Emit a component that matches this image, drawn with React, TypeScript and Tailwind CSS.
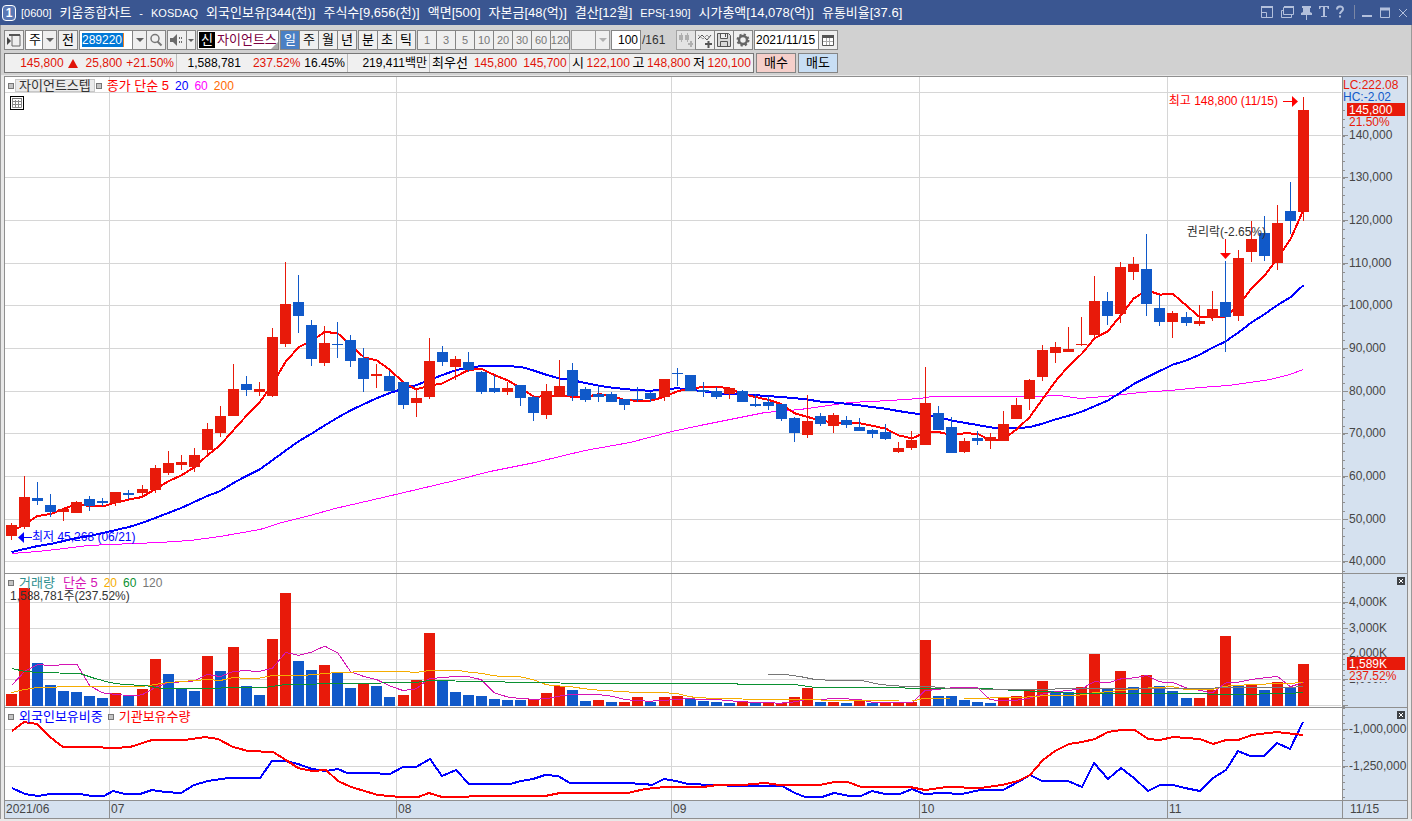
import type { ReactNode } from 'react';

const FONT = "font-['Liberation_Sans','Noto_Sans_CJK_KR',sans-serif]";

const UP = '#e81a0a';
const DOWN = '#1059c9';
const GRID = '#d6d6d6';

// Plot space shared by the three panels
const PLOT_LEFT = 5;
const PLOT_WIDTH = 1337;
const STEP = 13.05;
const barX = (i: number) => 11.5 + STEP * i;

const MONTH_LINES = [109, 396, 671, 919, 1167];

type Candle = [high: number, top: number, bottom: number, low: number, up: 0 | 1];

const candles: Candle[] = [
  [523, 525, 536, 540, 1], [476, 497, 527, 529, 1], [482, 498, 501, 505, 0], [494, 505, 512, 517, 0],
  [509, 509, 512, 521, 1], [501, 502, 513, 513, 1], [496, 499, 506, 511, 0], [498, 501, 503, 506, 0],
  [492, 492, 503, 506, 1], [490, 493, 495, 499, 0], [485, 489, 493, 497, 1], [465, 468, 490, 493, 1],
  [451, 463, 473, 475, 1], [455, 462, 465, 470, 1], [448, 455, 467, 472, 1], [423, 429, 450, 455, 1],
  [406, 416, 433, 437, 1], [364, 389, 416, 416, 1], [376, 384, 390, 396, 0], [382, 389, 392, 396, 1],
  [328, 337, 396, 397, 1], [262, 304, 344, 347, 1], [275, 302, 316, 333, 0], [320, 325, 359, 366, 0],
  [326, 343, 363, 366, 1], [322, 344, 345, 358, 0], [335, 340, 361, 367, 0], [348, 358, 379, 392, 0],
  [364, 374, 376, 388, 1], [371, 376, 391, 391, 0], [382, 382, 405, 409, 0], [389, 398, 403, 417, 1],
  [338, 361, 397, 399, 1], [346, 352, 362, 366, 0], [356, 359, 367, 380, 1], [352, 362, 370, 372, 0],
  [371, 372, 392, 394, 0], [375, 388, 392, 393, 0], [382, 388, 392, 395, 1], [385, 385, 398, 406, 0],
  [396, 397, 413, 421, 0], [384, 391, 415, 419, 1], [360, 386, 397, 397, 1], [363, 370, 396, 401, 0],
  [387, 389, 400, 402, 0], [386, 394, 397, 402, 0], [392, 394, 402, 402, 0], [399, 399, 405, 410, 0],
  [387, 399, 400, 402, 0], [392, 393, 399, 402, 0], [379, 379, 397, 401, 1], [368, 373, 374, 386, 0],
  [375, 375, 391, 391, 0], [382, 390, 392, 397, 0], [387, 391, 397, 399, 0], [388, 388, 394, 399, 1],
  [390, 391, 402, 402, 0], [394, 404, 406, 407, 0], [396, 402, 406, 410, 0], [404, 404, 419, 421, 0],
  [417, 418, 433, 442, 0], [395, 421, 435, 438, 1], [413, 416, 424, 426, 0], [413, 415, 426, 433, 1],
  [416, 420, 425, 428, 0], [418, 427, 431, 431, 0], [429, 430, 434, 438, 0], [424, 432, 439, 440, 0],
  [442, 448, 452, 453, 1], [431, 440, 448, 450, 1], [367, 403, 445, 445, 1], [406, 413, 430, 430, 0],
  [417, 427, 453, 453, 0], [438, 441, 452, 453, 1], [431, 438, 441, 445, 0], [433, 437, 441, 449, 1],
  [411, 424, 441, 441, 1], [398, 405, 419, 419, 1], [379, 380, 399, 410, 1], [345, 350, 377, 381, 1],
  [342, 347, 353, 363, 1], [327, 349, 352, 352, 1], [317, 344, 345, 346, 1], [276, 301, 335, 337, 1],
  [292, 301, 316, 325, 0], [262, 267, 314, 323, 1], [257, 264, 272, 280, 1], [234, 269, 304, 316, 0],
  [295, 308, 322, 326, 0], [311, 313, 322, 338, 1], [312, 317, 323, 326, 0], [305, 321, 324, 326, 1],
  [291, 309, 318, 321, 1], [261, 302, 317, 352, 0], [250, 258, 316, 321, 1], [221, 239, 252, 262, 1],
  [216, 233, 256, 261, 0], [205, 223, 263, 270, 1], [182, 211, 221, 234, 0], [97, 110, 212, 221, 1],
];

// Top edge of each volume bar, negative when volume fell
const volumes = [
  694, 588, -663, -685, -691, -692, -696, -698, 693, -696, 689, 659, -674, -689, -691, 656, -671, 647, -686, -695,
  639, 593, -661, -670, 665, -673, -688, 684, -686, -697, 695, 680, 633, -680, -692, -695, -696, -699, -700, -700,
  699, 693, 686, -690, -701, 700, -702, 702, 697, -702, 697, 696, -699, -701, -702, -703, 701, -703, 703, 703,
  697, 688, -702, 702, -703, 700, -703, 703, 703, 702, 640, -696, -696, -700, -702, -703, 698, 696, 690, 681,
  -691, -692, 687, 654, -688, 671, -687, 675, -686, -691, -698, 698, 690, 636, -686, 685, -690, 682, -688, 664,
];

const closes = candles.map(([, top, bottom, , up]) => (up ? top : bottom));
const volumeTops = volumes.map(Math.abs);

// The seed holds the averages that need bars older than the first one drawn
const movingAverage = (values: number[], period: number, seed: number[]) =>
  values
    .map((_, i) => {
      if (i < seed.length) return seed[i];
      const slice = values.slice(i - period + 1, i + 1);
      return slice.reduce((sum, v) => sum + v, 0) / period;
    })
    .map((y, i) => `${barX(i).toFixed(1)},${y.toFixed(1)}`)
    .join(' ');

const priceMa5 = movingAverage(closes, 5, [532, 524, 516, 514]);
const priceMa20 = movingAverage(closes, 20, [
  552, 549, 546, 544, 541, 538, 536, 533, 530, 527, 523, 518, 513, 508, 502, 496, 491, 483, 476,
]);
const priceMa60 =
  '12,553 38,551 64,548 88,545 110,544 160,542 190,540 220,536 260,529 282,522 310,515 335,508 370,500 400,493 455,480 490,471 535,462 585,450 630,442 672,431 700,425 730,419 765,412 800,409 850,402 890,400 920,398 932,396 1035,396 1060,395 1080,398 1093,397 1115,395 1140,392 1170,390 1200,387 1228,385 1250,382 1270,379 1290,374 1303,369';

const volumeMa5 = movingAverage(volumeTops, 5, [685, 671, 664, 665]);
const volumeMa20 = movingAverage(volumeTops, 20, [
  692, 689, 687, 687, 686, 686, 686, 686, 686, 686, 686, 684, 682, 681, 680, 679, 680, 677, 678,
]);
const volumeMa60 =
  '12,668 25,671 38,672 80,673 95,678 110,682 123,684 145,685 162,688 215,688 228,687 265,687 285,684 350,683 415,682 430,680 480,681 530,682 590,683 735,683 740,684 795,684 815,687 890,687 920,688 985,688 1015,690 1045,691 1070,693 1200,693 1215,694 1230,694 1290,693 1303,692';
const volumeMa120 =
  '768,674 785,674 800,676 815,679 835,680 862,680 880,684 905,686 930,686 950,688 1010,689 1050,689 1060,688 1180,688 1250,687 1290,687 1303,686';

const foreignLine =
  '12,788 25,794 38,796 50,794 80,794 92,796 104,796 113,791 125,794 140,794 152,790 165,792 181,793 194,785 208,781 228,778 260,778 272,761 285,761 298,764 312,769 326,771 338,769 347,773 370,773 390,774 403,767 416,767 430,759 442,776 456,770 469,784 510,784 521,781 533,779 545,775 558,776 570,783 625,783 645,784 652,785 664,779 676,781 688,784 740,786 782,786 795,793 805,797 822,797 834,793 850,796 861,796 872,791 885,794 900,794 912,789 924,794 942,793 962,794 980,790 1003,790 1018,782 1030,775 1042,781 1068,781 1082,787 1094,763 1108,779 1121,768 1134,778 1148,791 1160,785 1173,785 1185,788 1200,791 1213,778 1226,770 1238,751 1250,756 1264,756 1277,743 1290,749 1303,722';
const institutionLine =
  '12,731 24,722 37,724 50,737 63,747 90,747 115,748 130,747 152,740 185,740 205,737 218,739 233,747 248,751 273,752 286,760 298,768 312,771 326,770 338,781 351,787 378,795 400,797 418,797 429,793 442,797 468,797 470,796 545,796 560,793 628,793 645,789 665,787 703,787 717,785 742,785 765,783 780,785 820,785 834,782 848,782 861,787 910,787 925,790 947,787 980,788 1002,785 1018,781 1030,775 1043,760 1055,751 1069,744 1082,742 1095,739 1108,732 1121,730 1135,730 1148,739 1160,740 1173,737 1200,739 1213,744 1226,740 1238,740 1252,735 1277,732 1303,735';

const titleItems = [
  { text: '[0600]', latin: true },
  { text: '키움종합차트' },
  { text: '-', latin: true },
  { text: 'KOSDAQ', latin: true },
  { text: '외국인보유[344(천)]' },
  { text: '주식수[9,656(천)]' },
  { text: '액면[500]' },
  { text: '자본금[48(억)]' },
  { text: '결산[12월]' },
  { text: 'EPS[-190]', latin: true },
  { text: '시가총액[14,078(억)]' },
  { text: '유통비율[37.6]' },
];

function Plot({ top, height, gridLines, children }: {
  top: number;
  height: number;
  gridLines: number[];
  children: ReactNode;
}) {
  return (
    <svg
      className="block w-full h-full"
      viewBox={`${PLOT_LEFT} ${top} ${PLOT_WIDTH} ${height}`}
      preserveAspectRatio="none"
    >
      <g fill={GRID} shapeRendering="crispEdges">
        {gridLines.map((y) => <rect key={y} x={5} y={y} width={1336} height={1} />)}
        {MONTH_LINES.map((x) => <rect key={x} x={x} y={top} width={1} height={height} />)}
      </g>
      {children}
    </svg>
  );
}

// Hairlines sit on the pixel centre, otherwise crispEdges drops their flat runs
function Line({ points, color, width = 1 }: { points: string; color: string; width?: number }) {
  return (
    <polyline
      points={points}
      fill="none"
      stroke={color}
      strokeWidth={width}
      strokeLinejoin="round"
      shapeRendering="crispEdges"
      transform={width === 1 ? 'translate(0 0.5)' : undefined}
    />
  );
}

function Ticks({ from, to, step }: { from: number; to: number; step: number }) {
  const ys: number[] = [];
  for (let y = from; y < to; y += step) ys.push(Math.round(y));
  return (
    <g fill="#8f8f8f" shapeRendering="crispEdges">
      {ys.map((y) => <rect key={y} x={1343} y={y} width={2} height={1} />)}
    </g>
  );
}

function AxisLabel({ y, children }: { y: number; children: string }) {
  return (
    <g>
      <rect x={1343} y={y} width={5} height={1} fill="#8f8f8f" />
      <text x={1349} y={y + 4} fill="#454545">{children}</text>
    </g>
  );
}

function Axis({ top, height, children }: { top: number; height: number; children: ReactNode }) {
  return (
    <svg
      className="block w-[64px] h-full text-xs"
      viewBox={`1343 ${top} 64 ${height}`}
    >
      {children}
    </svg>
  );
}

function Marker() {
  return <span className="w-[6px] h-[6px] border border-[#777] bg-[#c4c4c4] shrink-0" />;
}

function ToolButton({ label, active, muted, className = 'w-5 -ml-px', children }: {
  label?: string;
  active?: boolean;
  muted?: boolean;
  className?: string;
  children?: ReactNode;
}) {
  return (
    <button
      type="button"
      aria-label={label}
      className={`flex items-center justify-center h-5 shrink-0 border border-[#858585] ${
        active ? 'bg-[#4a80c4] text-white' : 'bg-[#efefef]'
      } ${muted ? 'text-[#777] text-[11px]' : ''} ${className}`}
    >
      {children}
    </button>
  );
}

function Caret({ muted }: { muted?: boolean }) {
  return (
    <svg width="8" height="4" viewBox="0 0 8 4" className="shrink-0">
      <path d="M0 0h8L4 4z" fill={muted ? '#b0b0b0' : '#606060'} />
    </svg>
  );
}

function PanelClose() {
  return (
    <button type="button" aria-label="닫기" className="absolute right-[2px] top-[3px] w-2 h-2 bg-[#3f4246]">
      <svg width="8" height="8" viewBox="0 0 8 8">
        <path d="M2 2l4 4M6 2l-4 4" stroke="#fff" />
      </svg>
    </button>
  );
}

function TitleBar() {
  return (
    <header className="flex items-center h-[25px] pl-[2px] pr-1 bg-[#3a5691] text-white">
      <span className="flex items-center justify-center w-[14px] h-4 rounded-sm border border-white bg-[#5a78b5] text-xs font-bold">1</span>
      <h1 className="flex items-center gap-2 ml-[5px] whitespace-nowrap">
        {titleItems.map(({ text, latin }) => (
          <span key={text} className={latin ? 'text-[11px]' : ''}>{text}</span>
        ))}
      </h1>
      <svg className="ml-auto shrink-0" width="148" height="20" viewBox="1260 3 148 20" fill="none" stroke="#b3c0dc">
        <path d="M1261.500 7v10.500h11v-11h-11M1261 12.500h5.500v5" />
        <path d="M1261 7h12" strokeWidth="2" />
        <path d="M1285.500 7.500h8v7h-10v-7zM1284 10.500h-2.500v7h10V15" />
        <path d="M1284 7h10" strokeWidth="2" />
        <path d="M1302 6h9v2h-1v4l2 1v2h-11v-2l2-1v-4h-1zM1306 15h1v5h-1z" fill="#b3c0dc" stroke="none" />
        <path d="M1319 6h10v3h-1l-1-2h-2v9h2v1h-6v-1h2V7h-2l-1 2h-1z" fill="#b3c0dc" stroke="none" />
        <path d="M1337 9.500c0-4 6-4 6-.5 0 2.500-3 2.500-3 5M1340 15.500v2" strokeWidth="2" />
        <path d="M1354.500 5v14" stroke="#7b87a5" />
        <path d="M1362 16h10" strokeWidth="2" />
        <path d="M1380.500 9v8.500h9V9" />
        <path d="M1380 9h10" strokeWidth="3" />
        <path d="M1399 9l8 8M1407 9l-8 8" />
      </svg>
    </header>
  );
}

function Toolbar() {
  return (
    <div className="flex items-center h-5 pl-[3px] gap-px">
      <ToolButton label="창 열기" className="w-5">
        <svg width="16" height="16" viewBox="0 0 16 16">
          <path d="M3 3h11v11H6M6 3v11" fill="none" stroke="#666" />
          <path d="M3 2h11v2H3z" fill="#555" />
          <path d="M1 5l4 4-4 4z" fill="#444" />
        </svg>
      </ToolButton>

      <div className="relative flex items-center h-5 w-8 border border-[#858585] bg-white">
        <select aria-label="구분" className="appearance-none w-full h-full pl-[3px] outline-none">
          <option>주</option>
        </select>
        <span className="absolute right-0 top-0 h-full w-[14px] flex items-center justify-center border-l border-[#858585] bg-[#efefef] pointer-events-none">
          <Caret />
        </span>
      </div>

      <ToolButton className="w-5">전</ToolButton>

      <div className="flex">
        <div className="flex items-center h-5 w-[68px] border border-[#858585] bg-white pl-[2px]">
          <span className="flex-1">
            <input
              aria-label="종목코드"
              defaultValue="289220"
              className="block w-[42px] h-[14px] text-xs bg-[#0078d7] text-white outline-none border-r border-[#f08020]"
            />
          </span>
          <button type="button" aria-label="종목 목록" className="flex items-center justify-center w-[14px] h-full border-l border-[#858585] bg-[#efefef]">
            <Caret />
          </button>
        </div>
        <ToolButton label="종목 검색">
          <svg width="14" height="14" viewBox="0 0 14 14" fill="none" stroke="#777">
            <circle cx="6" cy="5.500" r="4" strokeWidth="1.500" />
            <path d="M8.500 8.500l4 4" strokeWidth="2" />
          </svg>
        </ToolButton>
      </div>

      <div className="flex">
        <ToolButton label="소리" className="w-5">
          <svg width="14" height="12" viewBox="0 0 14 12" fill="#6a6a6a">
            <path d="M0 4h3v4H0zM3 4l4-4v12L3 8zM9 3h1v2H9zM9 7h1v2H9zM11 3h1v2h-1zM11 7h1v2h-1z" />
          </svg>
        </ToolButton>
        <ToolButton label="소리 설정" className="w-[10px] -ml-px">
          <svg width="6" height="3" viewBox="0 0 6 3" className="shrink-0">
            <path d="M0 0h6L3 3z" fill="#606060" />
          </svg>
        </ToolButton>
      </div>

      <div className="relative flex items-center h-5 w-[82px] border border-[#858585] bg-white pl-px gap-[2px] overflow-hidden whitespace-nowrap">
        <span className="flex items-center justify-center w-4 h-4 bg-black text-white shrink-0">신</span>
        <span className="text-[#7b0041]">자이언트스</span>
        <svg className="absolute right-0 bottom-0" width="7" height="7" viewBox="0 0 7 7">
          <path d="M7 0v7H0z" fill="#aaa" />
        </svg>
      </div>

      <div className="flex">
        <ToolButton active className="w-5">일</ToolButton>
        <ToolButton>주</ToolButton>
        <ToolButton>월</ToolButton>
        <ToolButton>년</ToolButton>
      </div>

      <div className="flex">
        <ToolButton className="w-5">분</ToolButton>
        <ToolButton>초</ToolButton>
        <ToolButton>틱</ToolButton>
      </div>

      <div className="flex pl-px">
        {['1', '3', '5', '10', '20', '30', '60', '120'].map((n) => (
          <ToolButton key={n} muted>{n}</ToolButton>
        ))}
      </div>

      <div className="relative h-5 w-[39px] border border-[#9a9a9a] bg-[#efefef]">
        <select aria-label="사용자 주기" disabled className="appearance-none w-full h-full" />
        <span className="absolute right-0 top-0 h-full w-[14px] flex items-center justify-center border-l border-[#9a9a9a] pointer-events-none">
          <Caret muted />
        </span>
      </div>

      <div className="flex items-center w-[64px] text-xs">
        <input aria-label="조회 개수" defaultValue="100" className="h-5 w-[30px] pr-[2px] text-right border border-[#858585] bg-white outline-none" />
        <span className="pl-px text-[#333]">/161</span>
      </div>

      <div className="flex">
        <ToolButton label="봉 추가" className="w-5 opacity-60">
          <svg width="16" height="16" viewBox="0 0 16 16" fill="#999" shapeRendering="crispEdges">
            <path d="M1 3h4v5H1zM3 1h1v9H3zM7 3h4v5H7zM9 1h1v9H9zM10 11h5v2h-5zM12 9h2v6h-2z" />
          </svg>
        </ToolButton>
        <ToolButton label="지표 추가">
          <svg width="16" height="16" viewBox="0 0 16 16" fill="none" stroke="#555">
            <path d="M1 7l4-4 5 5 4-5" />
            <path d="M1 3l5 4 4-4 3 3" stroke="#999" />
            <path d="M8 12h7M11.500 9v7" strokeWidth="2" />
          </svg>
        </ToolButton>
        <ToolButton label="저장">
          <svg width="14" height="14" viewBox="0 0 14 14" fill="#d8d8d8" stroke="#555">
            <path d="M.5.5h11l2 2v11H.5zM3.500.5v5h7v-5M3.500 13.500v-5h7v5M8.500 1v3" />
          </svg>
        </ToolButton>
        <ToolButton label="설정">
          <svg width="14" height="14" viewBox="0 0 14 14" fill="none" stroke="#666">
            <circle cx="7" cy="7" r="4" strokeWidth="2.500" />
            <circle cx="7" cy="7" r="5.500" strokeWidth="2" strokeDasharray="2.200 2.120" />
          </svg>
        </ToolButton>
      </div>

      <div className="flex text-xs">
        <input aria-label="조회 일자" defaultValue="2021/11/15" className="h-5 w-[65px] pl-px border border-[#858585] bg-white outline-none" />
        <ToolButton label="달력">
          <svg width="12" height="12" viewBox="0 0 12 12">
            <path d="M.5 2h11v9.500H.5z" fill="#fff" stroke="#555" />
            <path d="M0 1h12v3H0z" fill="#555" />
            <path d="M1 7.500h10M4.500 4v7M7.500 4v7" stroke="#aaa" />
          </svg>
        </ToolButton>
      </div>
    </div>
  );
}

function QuoteBar() {
  const red = 'text-[#e01408]';
  return (
    <div className="flex items-center pl-[3px] gap-[2px]">
      <div className="flex h-5 w-[750px] text-xs border border-[#777] bg-[#f0f0f0] whitespace-nowrap">
        <div className={`flex items-center justify-end w-[172px] pr-[2px] border-r border-[#bbb] ${red}`}>
          <span>145,800</span>
          <svg className="ml-1 mr-2" width="10" height="9" viewBox="0 0 10 9"><path d="M5 0l5 9H0z" fill="#e01408" /></svg>
          <span>25,800</span>
          <span className="ml-1">+21.50%</span>
        </div>
        <div className="flex items-center justify-end w-[171px] pr-[2px] border-r border-[#bbb]">
          <span>1,588,781</span>
          <span className={`ml-3 ${red}`}>237.52%</span>
          <span className="ml-1">16.45%</span>
        </div>
        <div className="flex items-center justify-end w-[82px] pr-[2px] border-r border-[#bbb]">219,411백만</div>
        <div className="flex items-center w-[140px] pl-[2px] border-r border-[#bbb]">
          <span className="text-[13px]">최우선</span>
          <span className={`ml-[6px] ${red}`}>145,800</span>
          <span className={`ml-[6px] ${red}`}>145,700</span>
        </div>
        <div className="flex flex-1 items-center justify-between px-[2px]">
          <span className="text-[13px]">시</span><span className={red}>122,100</span>
          <span className="text-[13px]">고</span><span className={red}>148,800</span>
          <span className="text-[13px]">저</span><span className={red}>120,100</span>
        </div>
      </div>
      <button type="button" className="h-5 w-10 border border-[#858585] bg-[#f5cfca]">매수</button>
      <button type="button" className="h-5 w-10 border border-[#858585] bg-[#c8def4]">매도</button>
    </div>
  );
}

function PricePanel() {
  return (
    <section className="flex h-[497px] border-b border-[#8f8f8f]">
      <div className="relative flex-1 min-w-0">
        <Plot top={77} height={496} gridLines={[92, 135, 177, 220, 263, 305, 348, 391, 433, 476, 519, 561]}>
          <Line points={priceMa60} color="#ff00ff" />
          <Line points={priceMa20} color="#0000ff" width={2} />
          <Line points={priceMa5} color="#ff0000" width={2} />
          <g shapeRendering="crispEdges">
            {candles.map(([high, top, bottom, low, up], i) => {
              const x = Math.round(barX(i) - 0.5);
              return (
                <g key={i} fill={up ? UP : DOWN}>
                  <rect x={x} y={high} width={1} height={low - high} />
                  <rect x={x - 5} y={top} width={11} height={bottom - top} />
                </g>
              );
            })}
          </g>
          <path d="M1283 101.500h10" stroke="#ff0000" />
          <path d="M1292 96l6 5.500-6 5.500z" fill="#ff0000" />
          <path d="M1225.500 239v14" stroke="#ff0000" />
          <path d="M1220 253h11l-5.500 6z" fill="#ff0000" />
          <path d="M22 537.500h10" stroke="#0000ff" />
          <path d="M24 532v11l-6-5.500z" fill="#0000ff" />
        </Plot>

        <div className="absolute left-[3px] top-[2px] flex items-center h-[13px] whitespace-nowrap">
          <Marker />
          <button type="button" className="flex items-center h-[13px] mx-px px-[3px] border border-[#c8c8c8] bg-[#ebebeb] text-[#333]">
            자이언트스텝
          </button>
          <Marker />
          <span className="ml-[5px] text-[#ff0000]">종가 단순 5</span>
          <span className="ml-[6px] text-xs text-[#0000ff]">20</span>
          <span className="ml-[6px] text-xs text-[#ff00ff]">60</span>
          <span className="ml-[6px] text-xs text-[#ff6a00]">200</span>
        </div>
        <button type="button" aria-label="데이터 표" className="absolute left-[5px] top-[19px]">
          <svg width="14" height="14" viewBox="0 0 14 14" fill="none">
            <rect x=".5" y=".5" width="13" height="13" fill="#fff" stroke="#000" />
            <path d="M2.500 3v8.500h9V3M5.500 4v7M8.500 4v7M3 5.500h8M3 8.500h8" stroke="#888" />
            <path d="M2 2.500h10" stroke="#777" />
          </svg>
        </button>

        <span className="absolute right-[64px] top-[14px] text-xs leading-5 text-[#ff0000] whitespace-nowrap">최고 148,800 (11/15)</span>
        <span className="absolute right-[76px] top-[145px] text-xs leading-5 text-[#333] whitespace-nowrap">권리락(-2.65%)</span>
        <span className="absolute left-[27px] top-[450px] text-xs leading-5 text-[#0000ff] whitespace-nowrap">최저 45,268 (06/21)</span>
      </div>

      <div className="border-l border-[#8f8f8f] bg-[#d5e1ef]">
        <Axis top={77} height={496}>
          <Ticks from={110} to={573} step={8.53} />
          {['140,000', '130,000', '120,000', '110,000', '100,000', '90,000', '80,000', '70,000', '60,000', '50,000', '40,000'].map((label, i) => (
            <AxisLabel key={label} y={[135, 177, 220, 263, 305, 348, 391, 433, 476, 519, 561][i]}>{label}</AxisLabel>
          ))}
          <text x={1343} y={89} fill={UP}>LC:222.08</text>
          <text x={1343} y={101} fill={DOWN}>HC:-2.02</text>
          <text x={1349} y={126} fill={UP}>21.50%</text>
          <rect x={1347} y={103} width={58} height={13} fill={UP} />
          <text x={1349} y={114} fill="#fff">145,800</text>
        </Axis>
      </div>
    </section>
  );
}

function VolumePanel() {
  return (
    <section className="relative flex h-[134px] border-b border-[#8f8f8f]">
      <div className="relative flex-1 min-w-0">
        <Plot top={574} height={133} gridLines={[602, 628, 653, 679, 705]}>
          <g shapeRendering="crispEdges">
            {volumes.map((v, i) => (
              <rect
                key={i}
                x={Math.round(barX(i) - 0.5) - 5}
                y={Math.abs(v)}
                width={11}
                height={706 - Math.abs(v)}
                fill={v > 0 ? UP : DOWN}
              />
            ))}
          </g>
          <Line points={volumeMa5} color="#d414b4" />
          <Line points={volumeMa20} color="#f5ac00" />
          <Line points={volumeMa60} color="#0a9132" />
          <Line points={volumeMa120} color="#777" />
        </Plot>
        <div className="absolute left-[3px] top-[2px] flex items-center h-[13px] whitespace-nowrap">
          <Marker />
          <span className="ml-[5px] text-[#2f8f8f]">거래량</span>
          <span className="ml-2 text-[#d414b4]">단순 5</span>
          <span className="ml-[6px] text-xs text-[#f5ac00]">20</span>
          <span className="ml-[6px] text-xs text-[#0a9132]">60</span>
          <span className="ml-[6px] text-xs text-[#777]">120</span>
        </div>
        <span className="absolute left-[5px] top-[12px] text-xs leading-5 text-[#333] whitespace-nowrap">1,588,781주(237.52%)</span>
      </div>
      <div className="border-l border-[#8f8f8f] bg-[#d5e1ef]">
        <Axis top={574} height={133}>
          <Ticks from={582} to={706} step={5.15} />
          <AxisLabel y={602}>4,000K</AxisLabel>
          <AxisLabel y={628}>3,000K</AxisLabel>
          <AxisLabel y={653}>2,000K</AxisLabel>
          <AxisLabel y={679}>1,000K</AxisLabel>
          <rect x={1343} y={705} width={5} height={1} fill="#8f8f8f" />
          <rect x={1349} y={670} width={57} height={12} fill="#d5e1ef" />
          <rect x={1347} y={657} width={58} height={13} fill={UP} />
          <text x={1349} y={668} fill="#fff">1,589K</text>
          <text x={1349} y={680} fill={UP}>237.52%</text>
        </Axis>
      </div>
      <PanelClose />
    </section>
  );
}

function HoldingsPanel() {
  return (
    <section className="relative flex h-[93px] border-b border-[#8f8f8f]">
      <div className="relative flex-1 min-w-0">
        <Plot top={708} height={92} gridLines={[729, 766]}>
          <Line points={foreignLine} color="#0000ff" width={2} />
          <Line points={institutionLine} color="#ff0000" width={2} />
        </Plot>
        <div className="absolute left-[3px] top-[2px] flex items-center h-[13px] whitespace-nowrap">
          <Marker />
          <span className="mx-[5px] text-[#0000ff]">외국인보유비중</span>
          <Marker />
          <span className="ml-[5px] text-[#ff0000]">기관보유수량</span>
        </div>
      </div>
      <div className="border-l border-[#8f8f8f] bg-[#d5e1ef]">
        <Axis top={708} height={92}>
          <Ticks from={708} to={800} step={7.4} />
          <AxisLabel y={729}>-1,000,000</AxisLabel>
          <AxisLabel y={766}>-1,250,000</AxisLabel>
        </Axis>
      </div>
      <PanelClose />
    </section>
  );
}

function DateAxis() {
  return (
    <div className="flex h-[17px] text-xs leading-4 bg-[#d5e1ef] text-[#454545]">
      <div className="grid flex-1 grid-cols-[104fr_287fr_275fr_248fr_248fr_175fr]">
        {['2021/06', '07', '08', '09', '10', '11'].map((label, i) => (
          <span key={label} className={i ? 'border-l border-[#8f8f8f] pl-px' : 'pl-px'}>{label}</span>
        ))}
      </div>
      <span className="w-[65px] border-l border-[#8f8f8f] pl-[7px]">11/15</span>
    </div>
  );
}

export default function App() {
  return (
    <div className={`min-h-screen bg-[#e8e8e8] text-black text-[13px] leading-4 ${FONT}`}>
      <TitleBar />
      <main className="border-x border-[#999]">
        <div className="flex flex-col gap-[3px] h-[50px] pt-[5px] bg-[#d1d1d1]">
          <Toolbar />
          <QuoteBar />
        </div>
        <div className="mt-px mx-[3px] border border-[#8f8f8f] bg-white">
          <PricePanel />
          <VolumePanel />
          <HoldingsPanel />
          <DateAxis />
        </div>
      </main>
    </div>
  );
}
